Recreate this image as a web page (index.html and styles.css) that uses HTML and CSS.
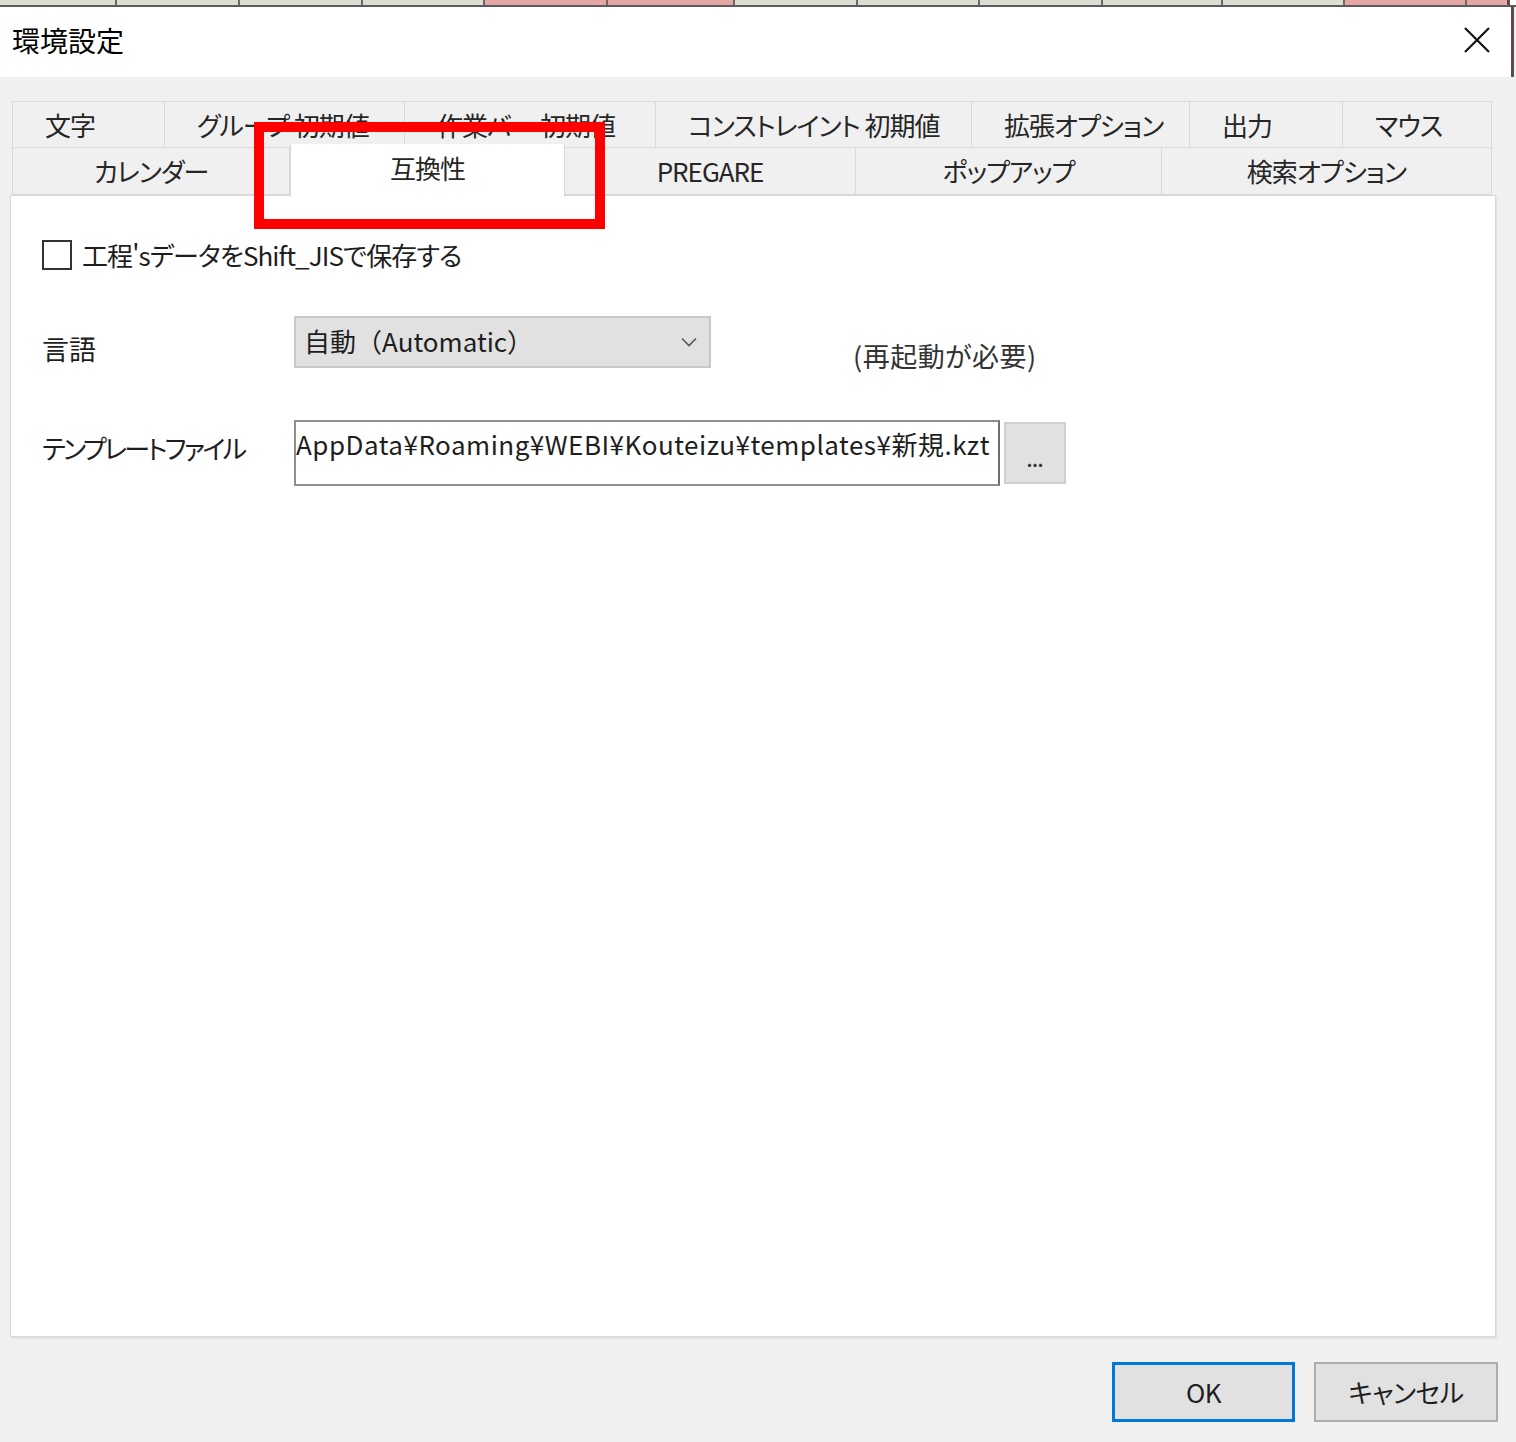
FILE: index.html
```html
<!DOCTYPE html>
<html lang="ja">
<head>
<meta charset="utf-8">
<title>環境設定</title>
<link rel="stylesheet" href="styles.css">
</head>
<body>
<div class="strip">
  <div class="cell w117"></div>
  <div class="cell w123"></div>
  <div class="cell w123"></div>
  <div class="cell w122"></div>
  <div class="cell pink w123"></div>
  <div class="cell pink w127"></div>
  <div class="cell w123"></div>
  <div class="cell w122"></div>
  <div class="cell w123"></div>
  <div class="cell w120"></div>
  <div class="cell w122"></div>
  <div class="cell pink w122"></div>
  <div class="cell pink last"></div>
</div>
<div class="titlebar">
  <div class="title">環境設定</div>
  <svg class="close" width="26" height="26" viewBox="0 0 26 26"><path d="M1 1 L25 25 M25 1 L1 25" stroke="#111" stroke-width="2.2" fill="none"/></svg>
</div>
<div class="body">
  <div class="tabs">
    <div class="tabrow back">
      <div class="tab" style="width:153px">文字</div>
      <div class="tab" style="width:240px">グループ 初期値</div>
      <div class="tab" style="width:251px">作業バー 初期値</div>
      <div class="tab" style="width:316px">コンストレイント 初期値</div>
      <div class="tab" style="width:218px">拡張オプション</div>
      <div class="tab" style="width:153px">出力</div>
      <div class="tab" style="width:149px">マウス</div>
    </div>
    <div class="tabrow front">
      <div class="tab" style="width:278px">カレンダー</div>
      <div class="tab selected" style="width:275px">互換性</div>
      <div class="tab" style="width:291px">PREGARE</div>
      <div class="tab" style="width:306px">ポップアップ</div>
      <div class="tab" style="width:330px">検索オプション</div>
    </div>
    <div class="highlight"></div>
  </div>
  <div class="panel">
    <div class="checkrow">
      <span class="checkbox"></span>
      <span class="checklabel">工程'sデータをShift_JISで保存する</span>
    </div>
    <div class="formrow langrow">
      <div class="label">言語</div>
      <div class="select">
        <span class="selval">自動（Automatic）</span>
        <svg width="16" height="10" viewBox="0 0 16 10"><path d="M1 1.5 L8 8.5 L15 1.5" stroke="#555" stroke-width="1.6" fill="none"/></svg>
      </div>
      <div class="note">(再起動が必要)</div>
    </div>
    <div class="formrow filerow">
      <div class="label narrow">テンプレートファイル</div>
      <div class="textbox"><span class="path">AppData¥Roaming¥WEBI¥Kouteizu¥templates¥新規.kzt</span></div>
      <div class="browse">...</div>
    </div>
  </div>
  <div class="buttons">
    <div class="btn ok">OK</div>
    <div class="btn">キャンセル</div>
  </div>
</div>
</body>
</html>
```
FILE: styles.css
```css
html, body {
  margin: 0;
  padding: 0;
}
body {
  width: 1516px;
  height: 1442px;
  overflow: hidden;
  background: #f0f0f0;
  font-family: "Noto Sans CJK JP", "Noto Sans", sans-serif;
  font-feature-settings: "palt";
  color: #1e1e1e;
}
.strip {
  display: flex;
  height: 5px;
  border-bottom: 2px solid #5b5b5b;
  background: #ffffff;
}
.cell {
  height: 5px;
  background: #deded3;
  border-right: 2px solid #6a6a6a;
  box-sizing: border-box;
}
.cell.pink { background: #e6a6a6; }
.w117 { width: 117px; }
.w120 { width: 120px; }
.w122 { width: 122px; }
.w123 { width: 123px; }
.w127 { width: 127px; }
.cell.last { width: 43px; border-right: 3px solid #5b4b4b; }
.titlebar {
  width: 1514px;
  height: 70px;
  background: #ffffff;
  border-right: 3px solid #5b4b4b;
  box-sizing: border-box;
  display: flex;
  align-items: center;
  justify-content: space-between;
  padding: 0 18px 0 12px;
}
.title {
  font-size: 28px;
  color: #000;
  line-height: 1;
  margin-top: -4px;
}
.close {
  margin-top: -4px;
  margin-right: 3px;
}
.body {
  display: flex;
  flex-direction: column;
}
.tabs {
  position: relative;
  margin: 24px 0 0 12px;
  display: flex;
  flex-direction: column;
}
.tabrow {
  display: flex;
  height: 47px;
}
.tab {
  box-sizing: border-box;
  height: 47px;
  border: 1px solid #d9d9d9;
  border-left: none;
  background: #f0f0f0;
  display: flex;
  align-items: center;
  justify-content: center;
  font-size: 26px;
  letter-spacing: -1px;
  color: #262626;
  line-height: 1;
  padding-top: 0;
}
.tabrow.back .tab {
  justify-content: flex-start;
  padding-left: 32px;
}
.tabrow .tab:first-child { border-left: 1px solid #d9d9d9; }
.tabrow + .tabrow .tab { border-top: none; }
.tab.selected {
  position: relative;
  z-index: 2;
  background: #ffffff;
  height: 53px;
  margin-top: -4px;
  border: 1px solid #d9d9d9;
  border-bottom: none;
  padding-bottom: 6px;
}
.highlight {
  position: absolute;
  z-index: 3;
  left: 242px;
  top: 21px;
  width: 351px;
  height: 107px;
  box-sizing: border-box;
  border: 10px solid #ff0000;
}
.panel {
  position: relative;
  z-index: 1;
  margin-left: 10px;
  width: 1486px;
  height: 1142px;
  box-sizing: border-box;
  background: #ffffff;
  border: 1px solid #d9d9d9;
  box-shadow: 1px 2px 0 #e3e3e3;
  padding: 44px 0 0 31px;
  display: flex;
  flex-direction: column;
}
.checkrow {
  display: flex;
  align-items: center;
  height: 30px;
}
.checkbox {
  width: 30px;
  height: 30px;
  box-sizing: border-box;
  border: 2px solid #333;
  background: #fff;
}
.checklabel {
  margin-left: 10px;
  font-size: 26px;
  letter-spacing: -0.9px;
  line-height: 1;
  color: #1e1e1e;
}
.formrow {
  display: flex;
  align-items: flex-start;
}
.label {
  width: 252px;
  flex: none;
  font-size: 27px;
  line-height: 1;
  color: #1e1e1e;
}
.label.narrow {
  font-size: 26px;
  letter-spacing: -2.6px;
}
.langrow { margin-top: 46px; }
.langrow .label { margin-top: 19px; }
.select {
  width: 417px;
  height: 52px;
  flex: none;
  box-sizing: border-box;
  background: #e1e1e1;
  border: 2px solid #c8c8c8;
  display: flex;
  align-items: center;
  justify-content: space-between;
  padding: 0 12px 0 8px;
  font-size: 26px;
  line-height: 1;
  color: #1e1e1e;
}
.selval {
  font-feature-settings: normal;
  margin-top: -2px;
}
.note {
  margin: 26px 0 0 142px;
  font-size: 27px;
  letter-spacing: 0.5px;
  line-height: 1;
  color: #333;
}
.filerow { margin-top: 51px; }
.filerow .label { margin-top: 15px; }
.textbox {
  width: 706px;
  height: 66px;
  flex: none;
  box-sizing: border-box;
  background: #fff;
  border: 2px solid #8f8f8f;
  border-right-color: #6f6f6f;
  overflow: hidden;
  display: flex;
  justify-content: flex-end;
  padding: 9px 8px 0 0;
}
.path {
  white-space: nowrap;
  font-size: 26px;
  letter-spacing: 0.5px;
  line-height: 1;
  color: #1e1e1e;
}
.browse {
  margin: 2px 0 0 4px;
  width: 62px;
  height: 62px;
  flex: none;
  box-sizing: border-box;
  background: #e1e1e1;
  border: 2px solid #cfcfcf;
  display: flex;
  align-items: flex-end;
  justify-content: center;
  padding-bottom: 14px;
  font-size: 17px;
  font-weight: bold;
  line-height: 1;
  color: #333;
}
.buttons {
  display: flex;
  justify-content: flex-end;
  gap: 19px;
  margin: 25px 18px 0 0;
}
.btn {
  width: 184px;
  height: 60px;
  box-sizing: border-box;
  background: #e1e1e1;
  border: 2px solid #adadad;
  display: flex;
  align-items: center;
  justify-content: center;
  font-size: 26px;
  letter-spacing: -0.5px;
  line-height: 1;
  color: #1e1e1e;
}
.btn.ok {
  width: 183px;
  border: 3px solid #0078d7;
}
```
